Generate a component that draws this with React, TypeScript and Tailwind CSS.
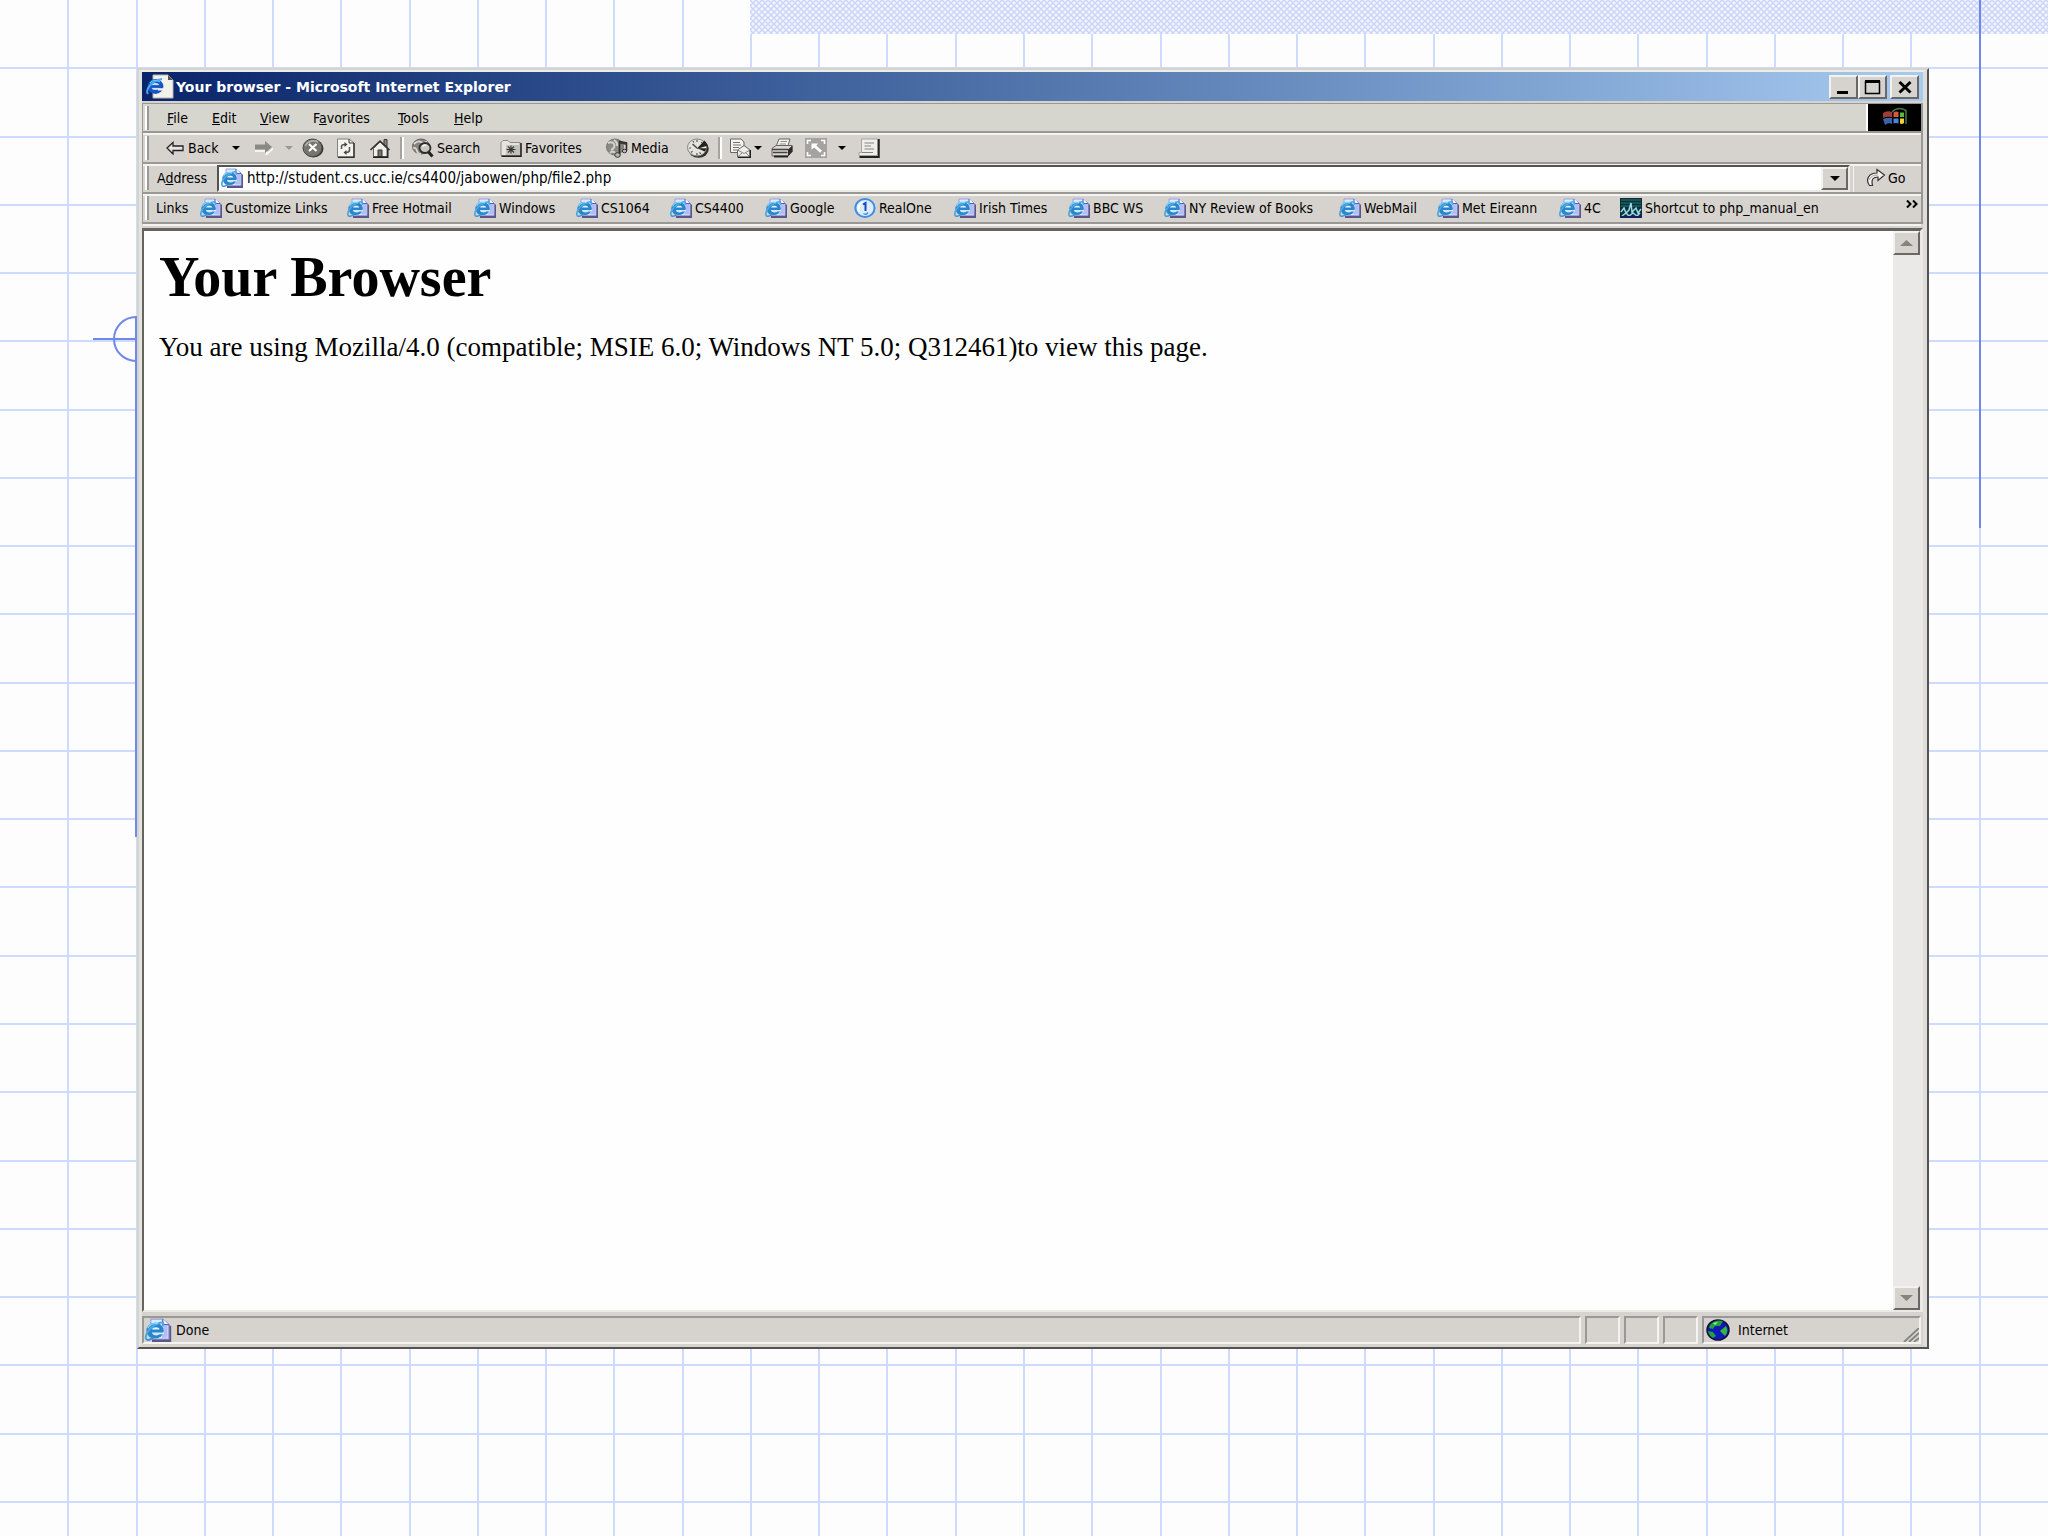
import React from "react";

const ui = "font-['DejaVu_Sans_Condensed','DejaVu_Sans',sans-serif] text-[14px] leading-[18px] text-black";
const raised =
  "flex items-center justify-center bg-[#d6d3ce] border-2 border-t-[#f4f2ee] border-l-[#f4f2ee] border-r-[#6a6866] border-b-[#6a6866]";
const band = "flex items-center border-b-2 border-b-[#9a9894] shadow-[0_2px_0_#f4f3f0]";

function Backdrop() {
  const step = 2048 / 30;
  const xs = Array.from({ length: 29 }, (_, i) => Math.round((i + 1) * step));
  const ys = Array.from({ length: 22 }, (_, i) => Math.round((i + 1) * step));
  return (
    <svg className="absolute inset-0 h-full w-full" viewBox="0 0 2048 1536" preserveAspectRatio="none" aria-hidden="true">
      <defs>
        <pattern id="weave" width="6" height="6" patternUnits="userSpaceOnUse">
          <rect width="6" height="6" fill="#f4f6ff" />
          <path d="M0 0L6 6M6 0L0 6" stroke="#ccd5f8" strokeWidth="1.5" />
        </pattern>
      </defs>
      <g stroke="#cfdaff" strokeWidth="2">
        {xs.map((x) => (
          <line key={x} x1={x} x2={x} y1="0" y2="1536" />
        ))}
        {ys.map((y) => (
          <line key={y} x1="0" x2="2048" y1={y} y2={y} />
        ))}
      </g>
      <rect x="750" y="0" width="1298" height="34" fill="url(#weave)" />
      <g fill="none" stroke="#6f88ea" strokeWidth="2">
        <path d="M1980 0V528" />
        <path d="M136 316V837" />
        <path d="M93 339H137" />
        <circle cx="136" cy="339" r="22" />
      </g>
    </svg>
  );
}

function PageIcon({ className = "h-5 w-[22px]" }: { className?: string }) {
  return (
    <svg viewBox="0 0 22 20" className={className + " shrink-0"} aria-hidden="true">
      <path d="M6 3H18L22 7V20H6Z" fill="#5c5688" />
      <path d="M5 1H15L20 5.500V17.500H5Z" fill="#dfe8ff" stroke="#8fa4e0" strokeWidth="1" />
      <path d="M15 1V5.500H20" fill="#fff" stroke="#5058b8" strokeWidth="1" />
      <path d="M16 6L19 6V16.500H14Z" fill="#b4bcf4" />
      <ellipse cx="8.500" cy="10.500" rx="7.200" ry="6.600" fill="#2a86cc" />
      <path d="M1 17.500C0 14.500 3 8.500 9 5.500S16.500 3.500 15 7" fill="none" stroke="#49a9e6" strokeWidth="1.700" />
      <path d="M1 17.500C2.500 19.200 5 18 7 16.500" fill="none" stroke="#3490d8" strokeWidth="1.500" />
      <path d="M6 9.500C6.600 7.200 12 7.200 12.300 9.500Z" fill="#e6f3ff" />
      <path d="M5.800 12H16V13.600H12.300C11 15 6.600 15 5.800 12Z" fill="#cfe8ff" />
      <path d="M2.500 8.500C4 5 8 3.800 11 4.800" fill="none" stroke="#7fd0f8" strokeWidth="1.300" />
    </svg>
  );
}

function TitleIcon() {
  return (
    <svg viewBox="0 0 28 25" className="h-[25px] w-7 shrink-0" aria-hidden="true">
      <path d="M7 1H22L27 6V24H7Z" fill="#f2f1ea" stroke="#b8b6aa" />
      <path d="M22 1V6H27Z" fill="#55534e" />
      <ellipse cx="9.500" cy="12.500" rx="6" ry="5.500" fill="#cfe2fb" stroke="#1456c8" strokeWidth="3.800" />
      <path d="M5 12.500H16" stroke="#1456c8" strokeWidth="2.800" />
      <path d="M12 14.200H18.500V16.500H12Z" fill="#f2f1ea" />
      <path d="M2 20C-1 16 5 7 16 5" fill="none" stroke="#4aa5f2" strokeWidth="2" />
      <path d="M4 9C6 6 11 5.500 14 8" fill="none" stroke="#58c4ff" strokeWidth="1.300" />
    </svg>
  );
}

function Caret({ color = "#000", big = false }: { color?: string; big?: boolean }) {
  return (
    <svg viewBox="0 0 8 4" className={big ? "h-[6px] w-[13px]" : "h-1 w-2"} preserveAspectRatio="none" aria-hidden="true">
      <path d="M0 0H8L4 4Z" fill={color} />
    </svg>
  );
}

const icon = "h-5 w-[22px] shrink-0";
const svgProps = { viewBox: "0 0 22 20", className: icon, "aria-hidden": true } as const;

const StopIcon = () => (
  <svg {...svgProps}>
    <ellipse cx="11.500" cy="10.500" rx="10" ry="9" fill="#333" />
    <ellipse cx="10.500" cy="9.800" rx="9.500" ry="8.800" fill="#77756f" stroke="#4c4b49" />
    <path d="M3.500 8C5 3 12 1.500 16 4" fill="none" stroke="#b9b7b2" strokeWidth="1.500" />
    <path d="M7 6L14.500 13M14.500 6L7 13" stroke="#fff" strokeWidth="2.200" />
  </svg>
);
const RefreshIcon = () => (
  <svg {...svgProps}>
    <path d="M2.500 1H14L19 5V19H2.500Z" fill="#f4f3ef" stroke="#85837e" />
    <path d="M19 5V19.300H3" fill="none" stroke="#333" strokeWidth="1.500" />
    <path d="M14 1V5H19" fill="none" stroke="#333" />
    <path d="M6.500 11V8.500Q6.500 6.500 10 6.500M14.500 9V12Q14.500 14.500 11 14.500" fill="none" stroke="#55534f" strokeWidth="1.500" />
    <path d="M9.500 4L12.500 6.500L9.500 9ZM11.500 12L8.500 14.500L11.500 17Z" fill="#44423f" />
  </svg>
);
const HomeIcon = () => (
  <svg {...svgProps}>
    <path d="M15 1.500H18V9H15Z" fill="#8c8a86" stroke="#333" />
    <path d="M4.500 10.500V18.500H18V10.500L11 4Z" fill="#efeeea" stroke="#66645f" />
    <path d="M1.500 12L11 3L20.500 12" fill="none" stroke="#33312f" strokeWidth="1.600" />
    <path d="M9 12H13V18.500H9Z" fill="#77756f" stroke="#333" />
    <path d="M18.800 11V19.300H4" fill="none" stroke="#222" strokeWidth="1.400" />
  </svg>
);
const SearchIcon = () => (
  <svg {...svgProps}>
    <ellipse cx="9" cy="8.500" rx="8.500" ry="7.500" fill="#85837e" stroke="#66645f" />
    <path d="M2 6Q6 2 9 4T15 3.500M1 10Q4 9 5 13T9 15.500" fill="none" stroke="#d9d7d2" strokeWidth="1.800" />
    <ellipse cx="13" cy="10" rx="5.500" ry="5" fill="#c9c7c3" stroke="#2d2c2b" strokeWidth="1.800" />
    <path d="M10.500 8.500Q12 6.500 14.500 7.500" fill="none" stroke="#fff" strokeWidth="1.300" />
    <path d="M16.500 14L20.500 18.500" stroke="#222" strokeWidth="3" />
  </svg>
);
const FavoritesIcon = () => (
  <svg {...svgProps}>
    <path d="M1 4.500L3 2.500H8L10 4.500H20V17.500H1Z" fill="#e6e4e0" stroke="#8b8985" />
    <path d="M6 7H20V17H6Z" fill="#c2c0bb" />
    <path d="M21 5V18.300H1.500" fill="none" stroke="#222" strokeWidth="1.600" />
    <path d="M11 7.500V15.500M6.500 11.500H15.500M8 8.500L14 14.500M14 8.500L8 14.500" stroke="#333" strokeWidth="1.100" />
  </svg>
);
const MediaIcon = () => (
  <svg {...svgProps}>
    <ellipse cx="9" cy="9" rx="8.500" ry="8" fill="#8b8984" stroke="#77756f" />
    <path d="M2 5Q6 3 8 6T5 12M8 2Q12 5 11 8M4 15Q7 12 9 15" fill="none" stroke="#d6d4cf" strokeWidth="2" />
    <path d="M13.500 17V3.500L20.500 5V13" fill="none" stroke="#2c2b2a" strokeWidth="1.600" />
    <path d="M13.500 3.500L20.500 5V7L13.500 5.500Z" fill="#3a3937" />
    <ellipse cx="11.500" cy="17" rx="2.800" ry="2.300" fill="#b8b6b2" stroke="#333" />
    <ellipse cx="18.500" cy="13" rx="2.200" ry="1.800" fill="#b8b6b2" stroke="#333" />
  </svg>
);
const HistoryIcon = () => (
  <svg {...svgProps}>
    <ellipse cx="11.500" cy="10.800" rx="10.300" ry="9" fill="#2f2e2d" />
    <ellipse cx="10" cy="9.500" rx="9.500" ry="8.500" fill="#e6e4df" stroke="#85837e" />
    <path d="M9.500 11L17.500 2.500L21 7.500Z" fill="#222" />
    <path d="M10 10L20 10.500L17.500 13.500Z" fill="#222" />
    <path d="M10 10L5.500 6" stroke="#44423f" strokeWidth="1.300" />
    <path d="M10 2V4M2 10H4M10 15V17.500M4 14.500L5.500 13.300M15 4L14.200 5M6 3L7 4.500M13.500 16L12.700 14.300" stroke="#55534f" strokeWidth="1.200" />
  </svg>
);
const MailIcon = () => (
  <svg {...svgProps}>
    <path d="M1.500 1H12L15 4V14.500H1.500Z" fill="#f4f3ef" stroke="#66645f" />
    <path d="M4 4.500H11M4 7H12M4 9.500H10M4 12H8" stroke="#77756f" />
    <path d="M8.500 12L15 7.500L21 12V19H8.500Z" fill="#efeeea" stroke="#66645f" />
    <path d="M8.500 12L15 15.500L21 12M8.500 19L13 15M21 19L17 15" fill="none" stroke="#85837e" />
    <path d="M21.300 12V19.400H9" fill="none" stroke="#222" strokeWidth="1.400" />
  </svg>
);
const PrintIcon = () => (
  <svg {...svgProps}>
    <path d="M8 1H19L16.500 9H5Z" fill="#f6f5f2" stroke="#66645f" />
    <path d="M9.500 3.500H16M8.500 6H15" stroke="#8b8985" />
    <path d="M1 10.500L5 7.500H21V13.500L17 18H1Z" fill="#dad8d4" stroke="#66645f" />
    <path d="M17 11.500L21.500 7.500V13.500L17 18.500Z" fill="#2c2b2a" />
    <path d="M1 11.500H17M2 14.500H16.500" stroke="#44423f" strokeWidth="1.300" />
    <path d="M3 18.500H17" stroke="#222" strokeWidth="2" />
  </svg>
);
const ResizeIcon = () => (
  <svg {...svgProps}>
    <rect width="22" height="20" fill="#a5a39f" />
    <path d="M6.500 5.500H13L11.300 7.500L17 12.800L15 14.800L9.300 9.500L6.500 11.500Z" fill="#fff" />
    <path d="M2.500 6V2.500H6M16 2.500H19.500V6M19.500 14V17.500H16M6 17.500H2.500V14" fill="none" stroke="#fff" strokeWidth="1.600" />
  </svg>
);
const EditIcon = () => (
  <svg {...svgProps}>
    <path d="M3.500 1H19.500V17.500H1V14.500H3.500Z" fill="#efeeea" stroke="#a5a39f" />
    <path d="M20.800 1V19H1.500" fill="none" stroke="#222" strokeWidth="1.900" />
    <path d="M6.500 5H16M6.500 8H13M6.500 11H16M4 14.500H15" stroke="#85837e" strokeWidth="1.200" />
  </svg>
);
const RealIcon = () => (
  <svg {...svgProps}>
    <ellipse cx="11" cy="10" rx="9.600" ry="9" fill="#dcecff" stroke="#3c8cea" strokeWidth="2" />
    <path d="M5 14Q3 7 9 4" fill="none" stroke="#fff" strokeWidth="1.800" />
    <path d="M9 6.500L11.500 5V13" fill="none" stroke="#1c44b4" strokeWidth="2" />
    <path d="M9.500 15.500Q12 17.500 14 14.500" fill="none" stroke="#4a92e6" strokeWidth="1.400" />
  </svg>
);
const ManualIcon = () => (
  <svg {...svgProps}>
    <rect width="22" height="20" fill="#0c3038" />
    <path d="M1 2H21M1 5H21M1 8H21" stroke="#176066" strokeWidth="1.300" />
    <path d="M1 14L4 10L6 15L9 12L11 5L12 14L16 10L18 15L21 11M2 18L6 15L9 18L13 15L17 18L20 15" fill="none" stroke="#9ad8ea" strokeWidth="1.500" />
    <path d="M0 19H22" stroke="#1a1c60" strokeWidth="2" />
  </svg>
);
const GoIcon = () => (
  <svg viewBox="0 0 20 20" className="h-5 w-5 shrink-0" aria-hidden="true">
    <path d="M3.500 17.500C-1 11 3 5 11 5V1.500L18.500 7L12 12.500V9C7 9 5 11.500 6.500 17.500Z" fill="#f4f3ef" stroke="#333" strokeWidth="1.200" />
    <path d="M3 12Q5 7 12 7" fill="none" stroke="#a5a39f" />
  </svg>
);
const GlobeIcon = () => (
  <svg viewBox="0 0 24 22" className="h-[22px] w-6 shrink-0" aria-hidden="true">
    <ellipse cx="12" cy="11" rx="11" ry="10" fill="#1018b8" stroke="#10103c" strokeWidth="1.500" />
    <path d="M4 6Q9 0 17 2L14 7L9 7L7 10L3 9Z" fill="#22a03a" />
    <path d="M2 12L7 13L10 17L7 19Q3 17 2 12Z" fill="#22a03a" />
    <path d="M14 12L20 7Q23 12 19 17Z" fill="#30b83c" />
    <path d="M7 4L12 3L9 6Z" fill="#a8f0a0" />
  </svg>
);
const WindowsLogo = () => (
  <svg viewBox="0 0 28 22" className="h-[22px] w-7" aria-hidden="true">
    <path d="M2 6Q6 3 11 5V10Q6 9 2 11Z" fill="#a03c38" />
    <path d="M2 12Q6 10 11 11V17Q7 15 4 18Z" fill="#3c64a4" />
    <path d="M11 5Q17 -1 25 3.500V17" fill="none" stroke="#3c7c3c" strokeWidth="1.500" />
    <path d="M12.500 5.500Q15 4 17.500 5V10H12.500Z" fill="#d85838" />
    <path d="M19 5.500H23V10H19Z" fill="#5cb83c" />
    <path d="M12.500 11.500H17.500V16.500Q15 15.500 12.500 16.500Z" fill="#4c84d8" />
    <path d="M19 11.500H23V16Q21 17.500 19 16.500Z" fill="#ecd038" />
  </svg>
);

const Grip = () => <div className="ml-0.5 h-6 w-1 shrink-0 border-r-2 border-l-2 border-r-[#9a9894] border-l-white" />;
const Divider = () => <div className="h-[22px] w-1 shrink-0 border-l-2 border-r-2 border-l-[#a5a39f] border-r-white" />;

const menus = [
  { pre: "", key: "F", post: "ile", width: "w-[45px]" },
  { pre: "", key: "E", post: "dit", width: "w-12" },
  { pre: "", key: "V", post: "iew", width: "w-[53px]" },
  { pre: "F", key: "a", post: "vorites", width: "w-[85px]" },
  { pre: "", key: "T", post: "ools", width: "w-[56px]" },
  { pre: "", key: "H", post: "elp", width: "w-12" },
];

const links = [
  { label: "Customize Links", width: "w-[147px]" },
  { label: "Free Hotmail", width: "w-[127px]" },
  { label: "Windows", width: "w-[102px]" },
  { label: "CS1064", width: "w-[94px]" },
  { label: "CS4400", width: "w-[95px]" },
  { label: "Google", width: "w-[89px]" },
  { label: "RealOne", width: "w-[100px]", icon: <RealIcon /> },
  { label: "Irish Times", width: "w-[114px]" },
  { label: "BBC WS", width: "w-24" },
  { label: "NY Review of Books", width: "w-[175px]" },
  { label: "WebMail", width: "w-[98px]" },
  { label: "Met Eireann", width: "w-[122px]" },
  { label: "4C", width: "w-[61px]" },
  { label: "Shortcut to php_manual_en", width: "w-[220px]", icon: <ManualIcon /> },
];

function ToolButton({ label, width, children }: { label: string; width: string; children: React.ReactNode }) {
  return (
    <button type="button" aria-label={label} className={"flex h-6 shrink-0 items-center whitespace-nowrap " + width}>
      {children}
    </button>
  );
}

export default function App() {
  return (
    <div className="relative flex min-h-screen flex-col bg-[#fdfdfd] pt-[68px] pr-[119px] pb-[187px] pl-[137px]">
      <Backdrop />
      <div className={"relative flex flex-1 flex-col border-2 border-t-[#d6d3ce] border-r-[#55534f] border-b-[#55534f] border-l-[#d6d3ce] bg-[#d6d3ce] " + ui}>
        <div className="flex flex-1 flex-col border-t-2 border-r-4 border-b-2 border-l-[3px] border-t-[#eceee6] border-r-[#dfddd9] border-b-[#d6d3ce] border-l-[#e4e4de]">
          <header className="flex h-[29px] items-center bg-linear-to-r from-[#0a246a] to-[#a6caf0] pr-1 pl-1">
            <TitleIcon />
            <div className="ml-0.5 flex-1 font-['DejaVu_Sans',sans-serif] text-[14px] font-bold whitespace-nowrap text-white">
              Your browser - Microsoft Internet Explorer
            </div>
            <div className="flex">
              <button type="button" aria-label="Minimize" className={raised + " h-6 w-[29px]"}>
                <svg viewBox="0 0 20 16" className="h-4 w-5" aria-hidden="true"><path d="M3 13.500H14" stroke="#000" strokeWidth="3" /></svg>
              </button>
              <button type="button" aria-label="Maximize" className={raised + " h-6 w-[29px]"}>
                <svg viewBox="0 0 20 16" className="h-4 w-5" aria-hidden="true"><path d="M2.500 2V14.500H16.500V2" fill="none" stroke="#000" strokeWidth="1.500" /><path d="M2 2.500H17" stroke="#000" strokeWidth="3" /></svg>
              </button>
              <button type="button" aria-label="Close" className={raised + " ml-[3px] h-6 w-[29px]"}>
                <svg viewBox="0 0 20 16" className="h-4 w-5" aria-hidden="true"><path d="M4.500 3L15.500 13.500M15.500 3L4.500 13.500" stroke="#000" strokeWidth="3" /></svg>
              </button>
            </div>
          </header>

          <div className="mt-0.5 flex flex-col border-t border-r-2 border-l border-[#9a9894]">
            <div className={band + " h-[29px] bg-[#d6d6ce]"}>
              <Grip />
              <nav className="ml-[18px] flex flex-1">
                {menus.map((m) => (
                  <button key={m.key} type="button" className={"text-left whitespace-nowrap " + m.width}>
                    {m.pre}
                    <span className="underline">{m.key}</span>
                    {m.post}
                  </button>
                ))}
              </nav>
              <div className="flex h-[27px] w-[55px] items-center justify-center border-l-2 border-l-white bg-black">
                <WindowsLogo />
              </div>
            </div>

            <div className={band + " h-[31px]"}>
              <Grip />
              <div className="ml-[17px] flex items-center">
                <ToolButton label="Back" width="w-[88px]">
                  <svg viewBox="0 0 18 14" className="mr-1 h-[14px] w-[18px]" aria-hidden="true">
                    <path d="M1 7L7 1.500V5H17V9.500H7V13Z" fill="#e8e6e2" stroke="#222" strokeWidth="1.300" />
                  </svg>
                  <span className="w-[44px] text-left">Back</span>
                  <Caret />
                </ToolButton>
                <ToolButton label="Forward" width="w-12">
                  <svg viewBox="0 0 19 15" className="mr-3 h-[15px] w-[19px]" aria-hidden="true">
                    <path d="M19 8.500L12.500 14.500V11H1" fill="none" stroke="#fff" strokeWidth="1.500" />
                    <path d="M18 7L11 1V4.500H1V9.500H11V13Z" fill="#8b8985" />
                  </svg>
                  <Caret color="#9a9894" />
                </ToolButton>
                <ToolButton label="Stop" width="w-[33px]"><StopIcon /></ToolButton>
                <ToolButton label="Refresh" width="w-[34px]"><RefreshIcon /></ToolButton>
                <ToolButton label="Home" width="w-[31px]"><HomeIcon /></ToolButton>
                <Divider />
                <ToolButton label="Search" width="ml-2 w-[88px]"><SearchIcon /><span className="ml-[3px]">Search</span></ToolButton>
                <ToolButton label="Favorites" width="w-[106px]"><FavoritesIcon /><span className="ml-[3px]">Favorites</span></ToolButton>
                <ToolButton label="Media" width="w-[81px]"><MediaIcon /><span className="ml-[3px]">Media</span></ToolButton>
                <ToolButton label="History" width="w-[31px]"><HistoryIcon /></ToolButton>
                <Divider />
                <ToolButton label="Mail" width="ml-[7px] w-[42px]"><MailIcon /><span className="ml-[3px]"><Caret /></span></ToolButton>
                <ToolButton label="Print" width="w-[34px]"><PrintIcon /></ToolButton>
                <ToolButton label="Full size" width="w-[53px]"><ResizeIcon /><span className="ml-[11px]"><Caret /></span></ToolButton>
                <ToolButton label="Edit" width="w-6"><EditIcon /></ToolButton>
              </div>
            </div>

            <div className={band + " h-[30px]"}>
              <Grip />
              <label htmlFor="address" className="ml-2 w-[60px] shrink-0">
                A<span className="underline">d</span>dress
              </label>
              <div className="flex h-[27px] flex-1 items-center border-2 border-t-[#55534f] border-r-[#eceae6] border-b-[#eceae6] border-l-[#55534f] bg-white pl-0.5">
                <PageIcon />
                <input
                  id="address"
                  type="text"
                  defaultValue="http://student.cs.ucc.ie/cs4400/jabowen/php/file2.php"
                  className="ml-1 h-[22px] min-w-0 flex-1 bg-white text-[15px] outline-none"
                />
                <button type="button" aria-label="Show addresses" className={raised + " h-[23px] w-[27px]"}>
                  <svg viewBox="0 0 10 5" className="h-[5px] w-[10px]" aria-hidden="true"><path d="M0 0H10L5 5Z" /></svg>
                </button>
              </div>
              <button type="button" className="ml-[3px] flex h-[27px] w-[68px] items-center border-l border-l-[#f4f3f0] pl-3">
                <GoIcon />
                <span className="ml-0.5">Go</span>
              </button>
            </div>

            <div className={band + " h-[30px]"}>
              <Grip />
              <span className="ml-[7px] w-11 shrink-0">Links</span>
              <nav className="flex min-w-0 flex-1">
                {links.map((l) => (
                  <a key={l.label} href="#" className={"flex shrink-0 items-center gap-[3px] whitespace-nowrap " + l.width}>
                    {l.icon ?? <PageIcon />}
                    {l.label}
                  </a>
                ))}
              </nav>
              <button type="button" aria-label="More links" className="mr-[3px] mb-2">
                <svg viewBox="0 0 12 8" className="h-2 w-3" fill="none" stroke="#000" strokeWidth="2" aria-hidden="true"><path d="M1 0.500L4.500 4L1 7.500M7 0.500L10.500 4L7 7.500" /></svg>
              </button>
            </div>
          </div>

          <div className="mt-1 flex flex-1 border-t-[3px] border-r-[3px] border-b-2 border-l-2 border-t-[#66645f] border-r-[#eceae6] border-b-[#eceae6] border-l-[#66645f] bg-[#fefefe]">
            <main className="flex-1 px-[15px] pt-[15px] font-['Liberation_Serif',serif]">
              <h1 className="text-[56px] leading-[62px] font-bold whitespace-nowrap">Your Browser</h1>
              <p className="mt-[23px] text-[27px] leading-[32px] whitespace-nowrap">
                You are using Mozilla/4.0 (compatible; MSIE 6.0; Windows NT 5.0; Q312461)to view this page.
              </p>
            </main>
            <div className="flex w-[27px] flex-col justify-between bg-[#ebe9e8]">
              <button type="button" aria-label="Scroll up" className={raised + " h-6"}>
                <span className="rotate-180"><Caret color="#85837e" big /></span>
              </button>
              <button type="button" aria-label="Scroll down" className={raised + " h-6"}>
                <Caret color="#85837e" big />
              </button>
            </div>
          </div>

          <footer className="mt-1 mr-0.5 mb-px flex h-[28px] gap-1">
            <div className="flex flex-1 items-center border-2 border-t-[#9a9894] border-r-[#f4f3f0] border-b-[#f4f3f0] border-l-[#9a9894]">
              <PageIcon className="h-6 w-7" />
              <span className="ml-1">Done</span>
            </div>
            {[0, 1, 2].map((i) => (
              <div key={i} className="w-[35px] border-2 border-t-[#9a9894] border-r-[#f4f3f0] border-b-[#f4f3f0] border-l-[#9a9894]" />
            ))}
            <div className="flex w-[219px] items-center border-2 border-t-[#9a9894] border-r-[#f4f3f0] border-b-[#f4f3f0] border-l-[#9a9894] pl-0.5">
              <GlobeIcon />
              <span className="ml-2 flex-1">Internet</span>
              <svg viewBox="0 0 16 14" className="h-[14px] w-4 self-end" stroke="#85837e" strokeWidth="1.800" aria-hidden="true"><path d="M1 14L16 0M6 14L16 5M11 14L16 10" /></svg>
            </div>
          </footer>
        </div>
      </div>
    </div>
  );
}
